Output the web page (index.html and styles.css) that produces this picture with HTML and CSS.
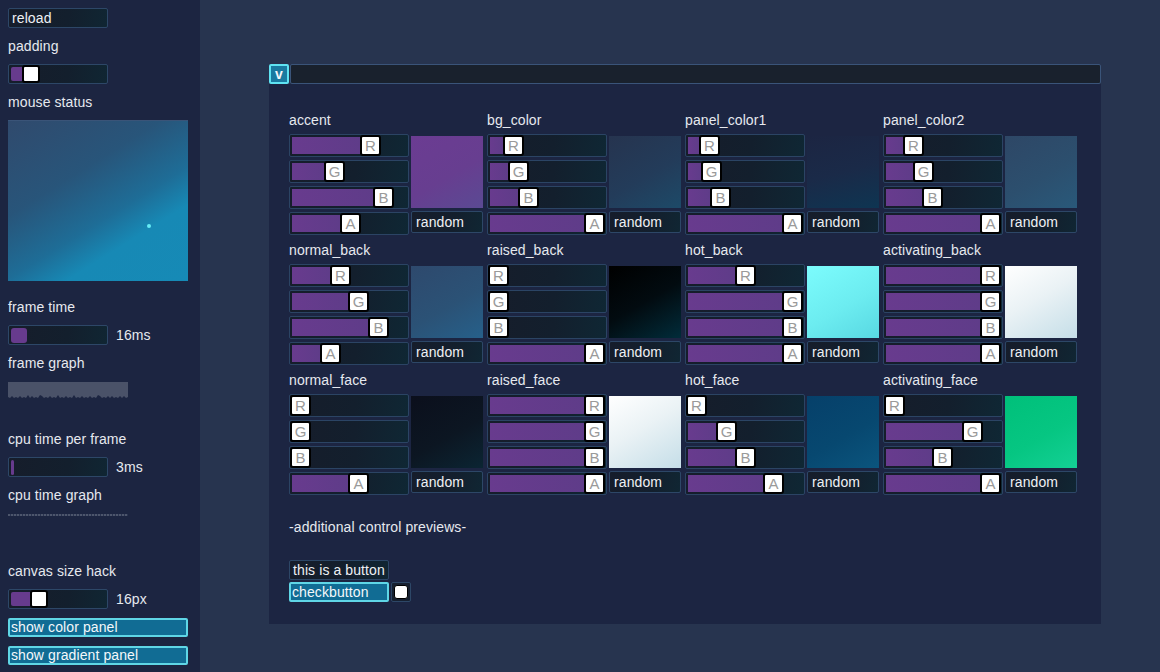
FILE: index.html
```html
<!DOCTYPE html>
<html>
<head>
<meta charset="utf-8">
<link rel="stylesheet" href="styles.css">
</head>
<body>
<aside class="sidebar">
  <button class="btn w100">reload</button>
  <div class="lbl">padding</div>
  <div class="sslider"><i class="sfill" style="width:11px"></i><b class="sknob"></b></div>
  <div class="lbl">mouse status</div>
  <div class="mouse"><span class="cursor-dot"></span></div>
  <div class="lbl">frame time</div>
  <div class="row"><div class="sbar"><i class="bfill" style="width:16px"></i></div><span>16ms</span></div>
  <div class="lbl">frame graph</div>
  <div class="graph">
    <svg width="120" height="17" viewBox="0 0 120 17"><path fill="#4a5268" d="M0 0H120V15L118 16L116 14L114 16L112 14L110 16L108 15L106 16L104 14L102 16L100 14L98 16L96 15L94 16L92 14L90 13L88 16L86 15L84 16L82 14L80 16L78 15L76 16L74 14L72 16L70 15L68 16L66 13L64 16L62 15L60 16L58 14L56 16L54 15L52 16L50 13L48 16L46 15L44 16L42 14L40 16L38 15L36 16L34 14L32 13L30 16L28 15L26 16L24 14L22 16L20 13L18 16L16 15L14 16L12 14L10 16L8 15L6 16L4 14L2 16L0 15Z"/></svg>
  </div>
  <div class="lbl">cpu time per frame</div>
  <div class="row"><div class="sbar"><i class="bfill" style="width:3px"></i></div><span>3ms</span></div>
  <div class="lbl">cpu time graph</div>
  <div class="graph"><div class="dots"></div></div>
  <div class="lbl">canvas size hack</div>
  <div class="row"><div class="sslider"><i class="sfill" style="width:19px"></i><b class="sknob"></b></div><span>16px</span></div>
  <button class="btn cyan w180">show color panel</button>
  <button class="btn cyan w180">show gradient panel</button>
</aside>

<main class="main">
  <section class="panel">
    <div class="panel-head">
      <button class="toggle">v</button>
      <div class="head-bar"></div>
    </div>
    <div class="panel-body">
      <div class="grid">
        <div class="grp">
          <div class="name">accent</div>
          <div class="gbody">
            <div class="sliders">
              <div class="sl"><i class="fill" style="width:68px"></i><b class="knob">R</b></div>
              <div class="sl"><i class="fill" style="width:32px"></i><b class="knob">G</b></div>
              <div class="sl"><i class="fill" style="width:81px"></i><b class="knob">B</b></div>
              <div class="sl"><i class="fill" style="width:48px"></i><b class="knob">A</b></div>
            </div>
            <div class="side"><div class="swatch sw-accent"></div><button class="btn random">random</button></div>
          </div>
        </div>
        <div class="grp">
          <div class="name">bg_color</div>
          <div class="gbody">
            <div class="sliders">
              <div class="sl"><i class="fill" style="width:13px"></i><b class="knob">R</b></div>
              <div class="sl"><i class="fill" style="width:18px"></i><b class="knob">G</b></div>
              <div class="sl"><i class="fill" style="width:28px"></i><b class="knob">B</b></div>
              <div class="sl"><i class="fill" style="width:94px"></i><b class="knob">A</b></div>
            </div>
            <div class="side"><div class="swatch sw-bg"></div><button class="btn random">random</button></div>
          </div>
        </div>
        <div class="grp">
          <div class="name">panel_color1</div>
          <div class="gbody">
            <div class="sliders">
              <div class="sl"><i class="fill" style="width:11px"></i><b class="knob">R</b></div>
              <div class="sl"><i class="fill" style="width:13px"></i><b class="knob">G</b></div>
              <div class="sl"><i class="fill" style="width:22px"></i><b class="knob">B</b></div>
              <div class="sl"><i class="fill" style="width:94px"></i><b class="knob">A</b></div>
            </div>
            <div class="side"><div class="swatch sw-panel1"></div><button class="btn random">random</button></div>
          </div>
        </div>
        <div class="grp">
          <div class="name">panel_color2</div>
          <div class="gbody">
            <div class="sliders">
              <div class="sl"><i class="fill" style="width:17px"></i><b class="knob">R</b></div>
              <div class="sl"><i class="fill" style="width:27px"></i><b class="knob">G</b></div>
              <div class="sl"><i class="fill" style="width:36px"></i><b class="knob">B</b></div>
              <div class="sl"><i class="fill" style="width:94px"></i><b class="knob">A</b></div>
            </div>
            <div class="side"><div class="swatch sw-panel2"></div><button class="btn random">random</button></div>
          </div>
        </div>

        <div class="grp">
          <div class="name">normal_back</div>
          <div class="gbody">
            <div class="sliders">
              <div class="sl"><i class="fill" style="width:38px"></i><b class="knob">R</b></div>
              <div class="sl"><i class="fill" style="width:56px"></i><b class="knob">G</b></div>
              <div class="sl"><i class="fill" style="width:76px"></i><b class="knob">B</b></div>
              <div class="sl"><i class="fill" style="width:28px"></i><b class="knob">A</b></div>
            </div>
            <div class="side"><div class="swatch sw-nback"></div><button class="btn random">random</button></div>
          </div>
        </div>
        <div class="grp">
          <div class="name">raised_back</div>
          <div class="gbody">
            <div class="sliders">
              <div class="sl min"><i class="fill" style="width:0px"></i><b class="knob">R</b></div>
              <div class="sl min"><i class="fill" style="width:0px"></i><b class="knob">G</b></div>
              <div class="sl min"><i class="fill" style="width:0px"></i><b class="knob">B</b></div>
              <div class="sl"><i class="fill" style="width:94px"></i><b class="knob">A</b></div>
            </div>
            <div class="side"><div class="swatch sw-rback"></div><button class="btn random">random</button></div>
          </div>
        </div>
        <div class="grp">
          <div class="name">hot_back</div>
          <div class="gbody">
            <div class="sliders">
              <div class="sl"><i class="fill" style="width:47px"></i><b class="knob">R</b></div>
              <div class="sl"><i class="fill" style="width:94px"></i><b class="knob">G</b></div>
              <div class="sl"><i class="fill" style="width:94px"></i><b class="knob">B</b></div>
              <div class="sl"><i class="fill" style="width:94px"></i><b class="knob">A</b></div>
            </div>
            <div class="side"><div class="swatch sw-hback"></div><button class="btn random">random</button></div>
          </div>
        </div>
        <div class="grp">
          <div class="name">activating_back</div>
          <div class="gbody">
            <div class="sliders">
              <div class="sl"><i class="fill" style="width:94px"></i><b class="knob">R</b></div>
              <div class="sl"><i class="fill" style="width:94px"></i><b class="knob">G</b></div>
              <div class="sl"><i class="fill" style="width:94px"></i><b class="knob">B</b></div>
              <div class="sl"><i class="fill" style="width:94px"></i><b class="knob">A</b></div>
            </div>
            <div class="side"><div class="swatch sw-aback"></div><button class="btn random">random</button></div>
          </div>
        </div>

        <div class="grp">
          <div class="name">normal_face</div>
          <div class="gbody">
            <div class="sliders">
              <div class="sl min"><i class="fill" style="width:0px"></i><b class="knob">R</b></div>
              <div class="sl min"><i class="fill" style="width:0px"></i><b class="knob">G</b></div>
              <div class="sl min"><i class="fill" style="width:0px"></i><b class="knob">B</b></div>
              <div class="sl"><i class="fill" style="width:56px"></i><b class="knob">A</b></div>
            </div>
            <div class="side"><div class="swatch sw-nface"></div><button class="btn random">random</button></div>
          </div>
        </div>
        <div class="grp">
          <div class="name">raised_face</div>
          <div class="gbody">
            <div class="sliders">
              <div class="sl"><i class="fill" style="width:94px"></i><b class="knob">R</b></div>
              <div class="sl"><i class="fill" style="width:94px"></i><b class="knob">G</b></div>
              <div class="sl"><i class="fill" style="width:94px"></i><b class="knob">B</b></div>
              <div class="sl"><i class="fill" style="width:94px"></i><b class="knob">A</b></div>
            </div>
            <div class="side"><div class="swatch sw-rface"></div><button class="btn random">random</button></div>
          </div>
        </div>
        <div class="grp">
          <div class="name">hot_face</div>
          <div class="gbody">
            <div class="sliders">
              <div class="sl min"><i class="fill" style="width:0px"></i><b class="knob">R</b></div>
              <div class="sl"><i class="fill" style="width:28px"></i><b class="knob">G</b></div>
              <div class="sl"><i class="fill" style="width:47px"></i><b class="knob">B</b></div>
              <div class="sl"><i class="fill" style="width:75px"></i><b class="knob">A</b></div>
            </div>
            <div class="side"><div class="swatch sw-hface"></div><button class="btn random">random</button></div>
          </div>
        </div>
        <div class="grp">
          <div class="name">activating_face</div>
          <div class="gbody">
            <div class="sliders">
              <div class="sl min"><i class="fill" style="width:0px"></i><b class="knob">R</b></div>
              <div class="sl"><i class="fill" style="width:76px"></i><b class="knob">G</b></div>
              <div class="sl"><i class="fill" style="width:46px"></i><b class="knob">B</b></div>
              <div class="sl"><i class="fill" style="width:94px"></i><b class="knob">A</b></div>
            </div>
            <div class="side"><div class="swatch sw-aface"></div><button class="btn random">random</button></div>
          </div>
        </div>
      </div>

      <div class="note">-additional control previews-</div>
      <div class="previews">
        <button class="btn w100">this is a button</button>
        <div class="checkrow">
          <button class="btn cyan w100">checkbutton</button>
          <span class="checkbox"><span class="check-inner"></span></span>
        </div>
      </div>
    </div>
  </section>
</main>
</body>
</html>
```

FILE: styles.css
```css
* { box-sizing: border-box; }
html, body { margin: 0; padding: 0; }
body {
  width: 1160px;
  height: 672px;
  overflow: hidden;
  display: flex;
  background: #27344f;
  font-family: "Liberation Sans", Arial, sans-serif;
  font-size: 14px;
  line-height: 20px;
  letter-spacing: 0.1px;
  color: #e6e9ef;
}

/* ---------- sidebar ---------- */
.sidebar {
  width: 200px;
  flex: none;
  background: #1c2541;
  padding: 8px;
  display: flex;
  flex-direction: column;
  align-items: flex-start;
  gap: 8px;
  overflow: hidden;
}
.sidebar > * { flex: none; }
.lbl { height: 20px; line-height: 20px; }
.row { display: flex; align-items: center; gap: 8px; }

.btn {
  display: block;
  height: 20px;
  margin: 0;
  padding: 0 3px;
  border: 1px solid #2d4767;
  border-radius: 2px;
  background: linear-gradient(100deg, #161d2b 0%, #131f2d 60%, #102633 100%);
  color: #eef0f4;
  font: inherit;
  letter-spacing: inherit;
  line-height: 18px;
  text-align: left;
  white-space: nowrap;
}
.w100 { width: 100px; }
.w180 { width: 180px; }
.btn.cyan {
  border: 2px solid #5fd6e6;
  background: #116c94;
  padding: 0 1px;
  line-height: 16px;
  color: #f4f8fb;
}
.sidebar .btn.cyan { margin-top: 1px; height: 19px; line-height: 15px; }

.sslider, .sbar {
  width: 100px;
  height: 20px;
  border: 1px solid #2d4767;
  border-radius: 2px;
  background: linear-gradient(100deg, #161d2b 0%, #131f2d 60%, #102633 100%);
  display: flex;
  align-items: center;
}
.sfill {
  display: block;
  height: 14px;
  margin-left: 2px;
  background: #673b8d;
  border-radius: 2px 0 0 2px;
}
.sknob {
  display: block;
  width: 18px;
  height: 18px;
  background: #fff;
  border: 2px solid #000;
  border-radius: 3px;
}
.bfill {
  display: block;
  height: 15px;
  margin-left: 2px;
  background: #673b8d;
  border-radius: 3px;
}

.mouse {
  position: relative;
  width: 180px;
  height: 161px;
  margin-bottom: 8px;
  border-top: 1px solid #3a5478;
  background: linear-gradient(148deg, #304a6d 0%, #28557a 35%, #1e6d97 58%, #1789b5 72%, #168ab6 100%);
}
.cursor-dot {
  position: absolute;
  left: 139px;
  top: 103px;
  width: 4px;
  height: 4px;
  border-radius: 50%;
  background: #66ecf6;
}

.graph { height: 40px; }
.graph svg { display: block; margin-top: 1px; }
.dots {
  width: 120px;
  height: 2px;
  margin-top: 1px;
  background: repeating-linear-gradient(90deg, #4d566c 0 2px, #2a3450 2px 3px);
}

/* ---------- main ---------- */
.main {
  flex: 1;
  padding: 64px 0 0 69px;
}
.panel {
  width: 832px;
  background: #1c2542;
}
.panel-head {
  display: flex;
  gap: 1px;
  height: 20px;
  background: #27344f;
}
.toggle {
  width: 20px;
  height: 20px;
  margin: 0;
  padding: 0;
  border: 2px solid #5fe3f2;
  border-radius: 2px;
  background: #1a7aa0;
  color: #f2f6fa;
  font: bold 14px/16px "Liberation Sans", Arial, sans-serif;
}
.head-bar {
  flex: 1;
  background: #19212d;
  border: 1px solid #3a5479;
  border-radius: 2px;
}
.panel-body {
  padding: 26px 20px 22px 20px;
}

.grid {
  display: grid;
  grid-template-columns: repeat(4, 194px);
  column-gap: 4px;
  row-gap: 5px;
}
.name { height: 20px; line-height: 20px; margin-bottom: 4px; }
.gbody { display: flex; gap: 2px; }
.sliders {
  width: 120px;
  display: flex;
  flex-direction: column;
  gap: 3px;
}
.sl {
  height: 23px;
  border: 1px solid #2b4464;
  border-radius: 2px;
  background: linear-gradient(100deg, #161d2b 0%, #131f2d 55%, #0f2734 100%);
  display: flex;
  align-items: center;
}
.fill {
  display: block;
  height: 17px;
  margin-left: 2px;
  background: linear-gradient(90deg, #683b8e, #5f3c89);
}
.sl.min .fill { margin-left: 0; }
.knob {
  display: block;
  flex: none;
  width: 21px;
  height: 21px;
  background: #fff;
  border: 2px solid #000;
  border-radius: 3px;
  color: #9a9a9a;
  font-weight: normal;
  font-size: 15px;
  line-height: 17px;
  text-align: center;
  letter-spacing: 0;
}
.side {
  width: 72px;
  padding-top: 2px;
  display: flex;
  flex-direction: column;
  gap: 3px;
}
.swatch { width: 72px; height: 72px; }
.random { width: 72px; height: 22px; line-height: 20px; padding: 0 4px; }

.sw-accent { background: linear-gradient(150deg, #6b3c92 0%, #673e90 55%, #5a4a93 100%); }
.sw-bg { background: linear-gradient(150deg, #26344f 0%, #233c5a 55%, #1d4a68 100%); }
.sw-panel1 { background: linear-gradient(165deg, #1c2542 0%, #1a2a48 50%, #0e3552 100%); }
.sw-panel2 { background: linear-gradient(150deg, #2e4766 0%, #2c4f6e 55%, #29597a 100%); }
.sw-nback { background: linear-gradient(150deg, #2e496d 0%, #2b5276 55%, #26608a 100%); }
.sw-rback { background: linear-gradient(150deg, #000 0%, #020b10 50%, #012c3a 100%); }
.sw-hback { background: linear-gradient(150deg, #7cfcfd 0%, #6cecf0 55%, #58d8e2 100%); }
.sw-aback { background: linear-gradient(150deg, #ffffff 0%, #eaf2f5 45%, #c5dee8 100%); }
.sw-nface { background: linear-gradient(150deg, #0b0f1c 0%, #0c1622 55%, #0b2533 100%); }
.sw-rface { background: linear-gradient(150deg, #ffffff 0%, #eaf2f5 45%, #c5dee8 100%); }
.sw-hface { background: linear-gradient(150deg, #06406a 0%, #074870 55%, #0b557e 100%); }
.sw-aface { background: linear-gradient(150deg, #00c07a 0%, #06c682 55%, #14d095 100%); }

.note { margin-top: 22px; height: 20px; line-height: 20px; }
.previews {
  margin-top: 23px;
  display: flex;
  flex-direction: column;
  gap: 2px;
}
.checkrow { display: flex; gap: 2px; }
.checkbox {
  width: 20px;
  height: 20px;
  border: 1px solid #2d4767;
  border-radius: 2px;
  background: #162030;
  display: flex;
  align-items: center;
  justify-content: center;
}
.check-inner {
  width: 14px;
  height: 14px;
  background: #fff;
  border: 1px solid #000;
  border-radius: 3px;
}
```
